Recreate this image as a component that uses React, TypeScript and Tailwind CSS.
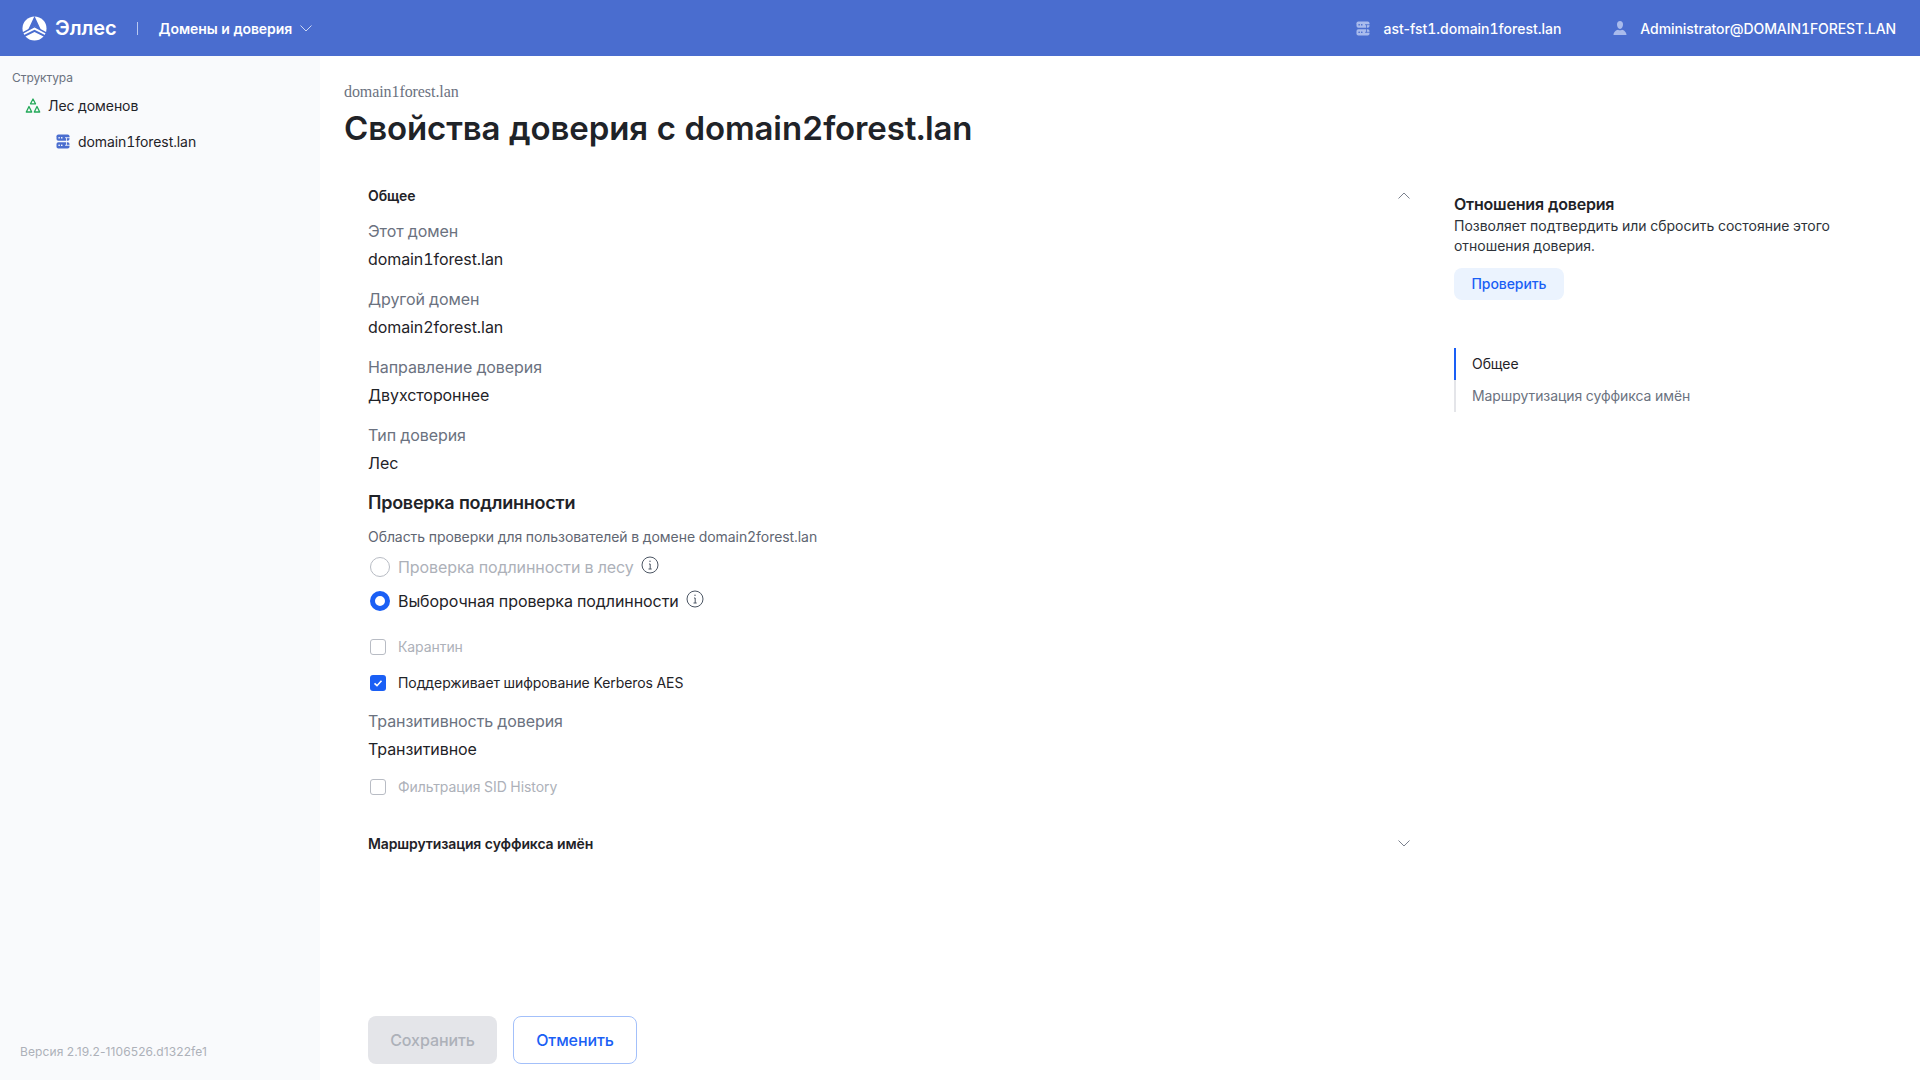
import React from "react";

function Chevron({ up }: { up?: boolean }) {
  return (
    <svg viewBox="0 0 12 7" className="w-[12px] h-[7px]" fill="none" stroke="#6b7280" strokeWidth="0.9">
      <path d={up ? "M0.500 6.500 6 1l5.500 5.500" : "M0.500 0.500 6 6l5.500-5.500"} />
    </svg>
  );
}

function ServerIcon({ bg, color }: { bg: string; color: string }) {
  return (
    <svg viewBox="0 0 14 15" className="w-[14px] h-[15px]" fill="none">
      <rect x="0.500" y="0.500" width="13" height="6.300" rx="1.800" fill={color} />
      <rect x="0.500" y="8.200" width="13" height="6.300" rx="1.800" fill={color} />
      <rect x="2.400" y="2.900" width="1.500" height="1.500" rx="0.500" fill={bg} />
      <rect x="5" y="2.900" width="1.500" height="1.500" rx="0.500" fill={bg} />
      <rect x="2.400" y="10.600" width="1.500" height="1.500" rx="0.500" fill={bg} />
      <rect x="5" y="10.600" width="1.500" height="1.500" rx="0.500" fill={bg} />
      <path d="M9 3.700h5M9 11.300h5M10.500 3.700v7.600" stroke={bg} strokeWidth="0.800" />
    </svg>
  );
}

function Logo() {
  return (
    <svg viewBox="0 0 26 26" className="w-[25px] h-[25px]">
      <circle cx="13" cy="13" r="12.500" fill="#fff" />
      <path d="M13 0 6 15 13 10.500 20 15z" fill="#4a6dcf" />
      <path d="M0 18 13 11 26 18" fill="none" stroke="#4a6dcf" strokeWidth="1.600" />
      <path d="M1 21.500 13 15.500 25 21.500" fill="none" stroke="#4a6dcf" strokeWidth="2.200" />
    </svg>
  );
}

function ForestIcon() {
  return (
    <svg viewBox="0 0 16 15" className="w-[16px] h-[15px]" fill="none" stroke="#22a858" strokeWidth="1.300" strokeLinejoin="round">
      <path d="M8 1 10.500 5.800h-5z" />
      <path d="M4 8.500 6.700 14H1.300z" />
      <path d="M12 8.500 14.700 14H9.300z" />
    </svg>
  );
}

function UserIcon() {
  return (
    <svg viewBox="0 0 16 16" className="w-[16px] h-[16px]" fill="#a9bbec">
      <path d="M8 1c1.900 0 3 1.500 3 3.500S9.900 9 8 9 5 6.500 5 4.500 6.100 1 8 1z" />
      <path d="M1.500 15c0-3 2.500-5 4.500-5.300.6.400 1.300.6 2 .6s1.400-.2 2-.6c2 .3 4.500 2.300 4.500 5.300z" />
    </svg>
  );
}

function InfoIcon() {
  return (
    <svg viewBox="0 0 18 18" className="w-[18px] h-[18px] mb-[4px]" fill="none" stroke="#4b5563" strokeWidth="1">
      <circle cx="9" cy="9" r="8" />
      <path d="M8 8h1.200v5M7.500 13h3.200" />
      <circle cx="9" cy="5.300" r="0.700" fill="#4b5563" stroke="none" />
    </svg>
  );
}

function Field({ label, value }: { label: string; value: string }) {
  return (
    <div className="h-[68px] flex flex-col">
      <div className="text-[16px] leading-[28px] text-[#6b7280]">{label}</div>
      <div className="text-[16px] leading-[28px] text-[#1f2328]">{value}</div>
    </div>
  );
}

function Radio({ checked, label }: { checked?: boolean; label: string }) {
  return (
    <div className="h-[34px] flex items-center">
      <span className={checked
        ? "ml-[2px] w-[20px] h-[20px] rounded-full border-[5px] border-[#1a5ff5] bg-white"
        : "ml-[2px] w-[20px] h-[20px] rounded-full border border-[#b8bcc4] bg-white"} />
      <span className={checked ? "ml-[8px] text-[16px] text-[#1f2328]" : "ml-[8px] text-[16px] text-[#adb1b9]"}>{label}</span>
      <span className="ml-[7px] flex"><InfoIcon /></span>
    </div>
  );
}

function Check({ checked, label }: { checked?: boolean; label: string }) {
  return (
    <div className="flex items-center">
      {checked ? (
        <span className="ml-[2px] w-[16px] h-[16px] rounded-[3px] bg-[#1a5ff5] flex items-center justify-center">
          <svg viewBox="0 0 12 12" className="w-[12px] h-[12px]" fill="none" stroke="#fff" strokeWidth="1.600"><path d="M2.500 6.300 5 8.700l4.500-5" /></svg>
        </span>
      ) : (
        <span className="ml-[2px] w-[16px] h-[16px] rounded-[3px] border border-[#b8bcc4] bg-white" />
      )}
      <span className={checked ? "ml-[12px] text-[14px] leading-[20px] text-[#1f2328]" : "ml-[12px] text-[14px] leading-[20px] text-[#adb1b9]"}>{label}</span>
    </div>
  );
}

export default function App() {
  return (
    <div className="w-[1920px] h-[1080px] overflow-hidden bg-white flex flex-col font-['Inter',sans-serif] text-[#1f2328] tabular-nums tracking-[-0.08px]">
      <header className="h-[56px] shrink-0 bg-[#4a6dcf] flex items-center text-white">
        <div className="ml-[22px] flex items-center">
          <Logo />
          <span className="ml-[8px] text-[20px] font-semibold">Эллес</span>
        </div>
        <span className="ml-[20px] w-px h-[13px] bg-[#b9c8f0]" />
        <span className="ml-[21px] text-[14px] font-semibold">Домены и доверия</span>
        <span className="ml-[8px] flex"><svg viewBox="0 0 12 7" className="w-[12px] h-[7px]" fill="none" stroke="#dbe3f8" strokeWidth="0.900"><path d="M0.500 0.500 6 6l5.500-5.500" /></svg></span>
        <div className="ml-auto flex items-center mr-[24px] text-[14px] font-medium">
          <ServerIcon bg="#4a6dcf" color="#a9bbec" />
          <span className="ml-[13px] tracking-normal"><span className="[font-variant-numeric:normal]">ast-fst</span>1.domain1forest.lan</span>
          <span className="ml-[51px]"><UserIcon /></span>
          <span className="ml-[12px]">Administrator@DOMAIN1FOREST.LAN</span>
        </div>
      </header>
      <div className="flex-1 flex min-h-0">
        <aside className="w-[320px] shrink-0 bg-[#f9fafc] flex flex-col">
          <div className="ml-[12px] mt-[14px] text-[12px] leading-[16px] text-[#6b7280]">Структура</div>
          <div className="ml-[25px] mt-[5px] h-[28px] flex items-center text-[14px]">
            <ForestIcon />
            <span className="ml-[7px]">Лес доменов</span>
          </div>
          <div className="ml-[56px] mt-[8px] h-[28px] flex items-center text-[14px]">
            <ServerIcon bg="#f9fafc" color="#4a6dcf" />
            <span className="ml-[8px]">domain1forest.lan</span>
          </div>
          <div className="mt-auto ml-[20px] mb-[20px] text-[12px] leading-[16px] text-[#adb1b9] [font-variant-numeric:normal] tracking-[0.1px]">Версия 2.19.2-1106526.d1322fe1</div>
        </aside>
        <main className="flex-1 flex flex-col min-w-0">
          <div className="ml-[24px] mt-[27px] font-['Liberation_Serif',serif] text-[16px] leading-[18px] text-[#6b7280]">domain1forest.lan</div>
          <h1 className="ml-[24px] mt-[3px] text-[33px] leading-[48px] font-semibold tracking-[-0.12px]">Свойства доверия с domain2forest.lan</h1>
          <div className="flex flex-1 min-h-0 mt-[28px]">
            <div className="ml-[48px] w-[1042px] shrink-0 flex flex-col">
              <div className="h-[30px] flex items-center justify-between">
                <span className="text-[14px] font-semibold">Общее</span>
                <Chevron up />
              </div>
              <div className="mt-[7px]">
                <Field label="Этот домен" value="domain1forest.lan" />
                <Field label="Другой домен" value="domain2forest.lan" />
                <Field label="Направление доверия" value="Двухстороннее" />
                <Field label="Тип доверия" value="Лес" />
              </div>
              <div className="text-[18px] leading-[28px] font-semibold tracking-[-0.25px]">Проверка подлинности</div>
              <div className="mt-[10px] text-[14px] leading-[20px] text-[#5f6672] tracking-[-0.06px]">Область проверки для пользователей в домене domain2forest.lan</div>
              <div className="mt-[3px]">
                <Radio label="Проверка подлинности в лесу" />
                <Radio checked label="Выборочная проверка подлинности" />
              </div>
              <div className="mt-[19px]"><Check label="Карантин" /></div>
              <div className="mt-[16px]"><Check checked label="Поддерживает шифрование Kerberos AES" /></div>
              <div className="mt-[14px]">
                <Field label="Транзитивность доверия" value="Транзитивное" />
              </div>
              <div className="mt-[2px]"><Check label="Фильтрация SID History" /></div>
              <div className="mt-[31px] h-[30px] flex items-center justify-between">
                <span className="text-[14px] font-semibold tracking-[-0.12px]">Маршрутизация суффикса имён</span>
                <Chevron />
              </div>
              <div className="mt-auto mb-[16px] flex gap-[16px]">
                <button className="w-[129px] h-[48px] rounded-[8px] bg-[#e4e5e9] text-[16px] font-medium text-[#adb1b9]">Сохранить</button>
                <button className="w-[124px] h-[48px] rounded-[8px] border border-[#a3c0fa] bg-white text-[16px] font-medium text-[#1a5ff5]">Отменить</button>
              </div>
            </div>
            <div className="ml-[44px] w-[400px] shrink-0">
              <div className="mt-[12px] text-[16px] leading-[24px] font-semibold tracking-[-0.2px]">Отношения доверия</div>
              <div className="text-[14px] leading-[20px] text-[#2e333a] tracking-[-0.02px]">Позволяет подтвердить или сбросить состояние этого<br />отношения доверия.</div>
              <button className="mt-[12px] w-[110px] h-[32px] rounded-[8px] bg-[#ebf3fe] text-[14px] font-medium text-[#1a5ff5] pb-[1px]">Проверить</button>
              <div className="mt-[48px] flex flex-col">
                <div className="h-[32px] border-l-2 border-[#1a5ff5] pl-[16px] pb-[1px] flex items-center text-[14px] text-[#1f2328]">Общее</div>
                <div className="h-[32px] border-l-2 border-[#e4e5e9] pl-[16px] pb-[1px] flex items-center text-[14px] text-[#6b7280]">Маршрутизация суффикса имён</div>
              </div>
            </div>
          </div>
        </main>
      </div>
    </div>
  );
}
